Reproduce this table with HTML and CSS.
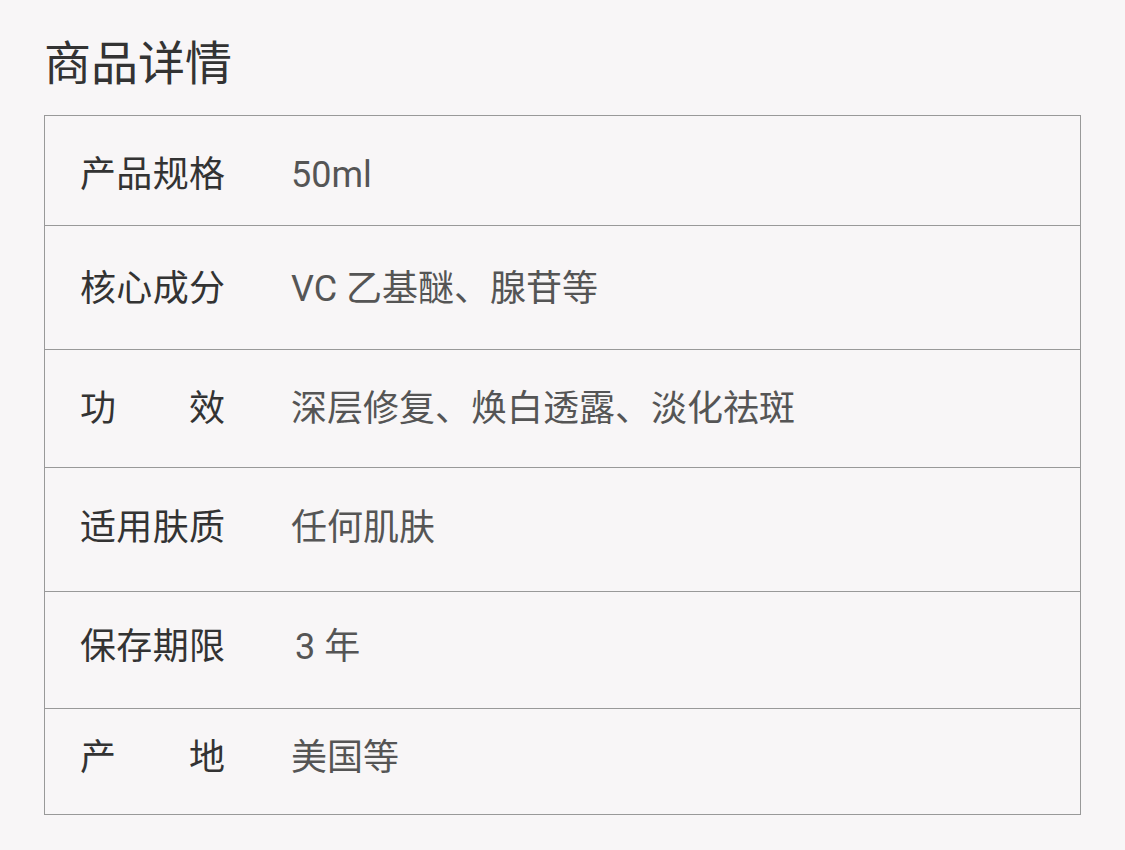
FILE: index.html
```html
<!DOCTYPE html>
<html lang="zh-CN">
<head>
<meta charset="utf-8">
<title>商品详情</title>
<link rel="stylesheet" href="styles.css">
</head>
<body>
<div class="page">
  <h1 class="title">商品详情</h1>
  <div class="spec">
    <div class="row r1"><div class="pair"><div class="label">产品规格</div><div class="val">50ml</div></div></div>
    <div class="row r2"><div class="pair"><div class="label">核心成分</div><div class="val">VC 乙基醚、腺苷等</div></div></div>
    <div class="row r3"><div class="pair"><div class="label">功效</div><div class="val">深层修复、焕白透露、淡化祛斑</div></div></div>
    <div class="row r4"><div class="pair"><div class="label">适用肤质</div><div class="val">任何肌肤</div></div></div>
    <div class="row r5"><div class="pair"><div class="label">保存期限</div><div class="val indent">3 年</div></div></div>
    <div class="row r6"><div class="pair"><div class="label">产地</div><div class="val">美国等</div></div></div>
  </div>
</div>
</body>
</html>
```
FILE: styles.css
```css
html, body {
  margin: 0;
  padding: 0;
  background: #f8f6f7;
}
body {
  font-family: "Noto Sans CJK SC", "Noto Sans", sans-serif;
}
.page {
  padding: 25px 44px 0 44px;
  width: 1037px;
}
.title {
  margin: 0 0 20px 0;
  font-size: 47px;
  line-height: 70px;
  font-weight: 400;
  color: #333;
}
.spec {
  border: 1px solid #999;
  border-bottom: none;
}
.row {
  display: flex;
  align-items: center;
  border-bottom: 1px solid #999;
  padding-left: 35px;
  box-sizing: border-box;
}
.pair {
  display: flex;
  align-items: baseline;
}
.r1 { height: 110px; padding-top: 4px; }
.r2 { height: 124px; padding-bottom: 2px; }
.r3 { height: 118px; padding-bottom: 3px; }
.r4 { height: 124px; padding-bottom: 8px; }
.r5 { height: 117px; padding-bottom: 10px; }
.r6 { height: 106px; padding-bottom: 11px; }
.label {
  width: 145px;
  margin-right: 66px;
  font-size: 36px;
  line-height: 50px;
  color: #333;
  text-align: justify;
  text-align-last: justify;
}
.val {
  font-family: "Roboto", "Noto Sans CJK SC", sans-serif;
  font-size: 36px;
  line-height: 50px;
  color: #555;
}
.indent {
  padding-left: 4px;
}
```
